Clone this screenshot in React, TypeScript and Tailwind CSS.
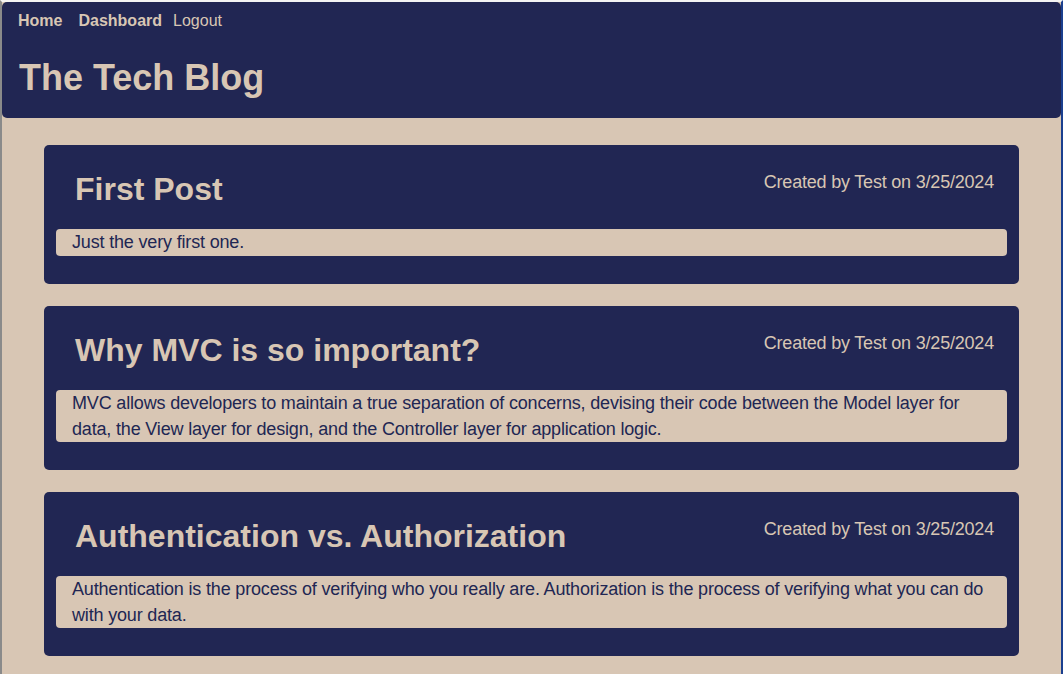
import React from "react";

const posts = [
  {
    title: "First Post",
    body: "Just the very first one.",
  },
  {
    title: "Why MVC is so important?",
    body: "MVC allows developers to maintain a true separation of concerns, devising their code between the Model layer for data, the View layer for design, and the Controller layer for application logic.",
  },
  {
    title: "Authentication vs. Authorization",
    body: "Authentication is the process of verifying who you really are. Authorization is the process of verifying what you can do with your data.",
  },
];

export default function App() {
  return (
    <div
      className="min-h-[674px] bg-[#d8c6b4] border-l-2 border-l-[#8a8a8a] border-t-2 border-t-[#f4f4f4] border-r-2 border-r-[#1a3f8f]"
      style={{ fontFamily: '"Liberation Sans", Arial, sans-serif' }}
    >
      <header className="bg-[#212653] rounded-[5px] h-[116px] pt-[9px] pl-[16px] text-[#d8c6b4]">
        <nav className="flex text-[16px] leading-[20px]">
          <a className="font-bold mr-[16px]">Home</a>
          <a className="font-bold mr-[11px]">Dashboard</a>
          <a>Logout</a>
        </nav>
        <h1 className="mt-[26px] text-[36px] leading-[42px] font-bold ml-[1px]">The Tech Blog</h1>
      </header>
      <main className="flex flex-col gap-[22px] pt-[27px] pl-[42px] pr-[42px]">
        {posts.map((p) => (
          <section key={p.title} className="bg-[#212653] rounded-[5px] pt-[24px] pb-[28px] px-[12px]">
            <div className="flex justify-between h-[40px] mb-[20px]">
              <h2 className="ml-[19px] text-[32px] leading-[40px] font-bold text-[#d8c6b4]">{p.title}</h2>
              <p className="mt-[2px] mr-[13px] text-[18px] leading-[22px] tracking-[-0.2px] text-[#d8c6b4]">
                Created by Test on 3/25/2024
              </p>
            </div>
            <div className="bg-[#d8c6b4] rounded-[4px] px-[16px] min-h-[27px] text-[18px] leading-[26px] tracking-[-0.17px] text-[#212653]">
              {p.body}
            </div>
          </section>
        ))}
      </main>
    </div>
  );
}
